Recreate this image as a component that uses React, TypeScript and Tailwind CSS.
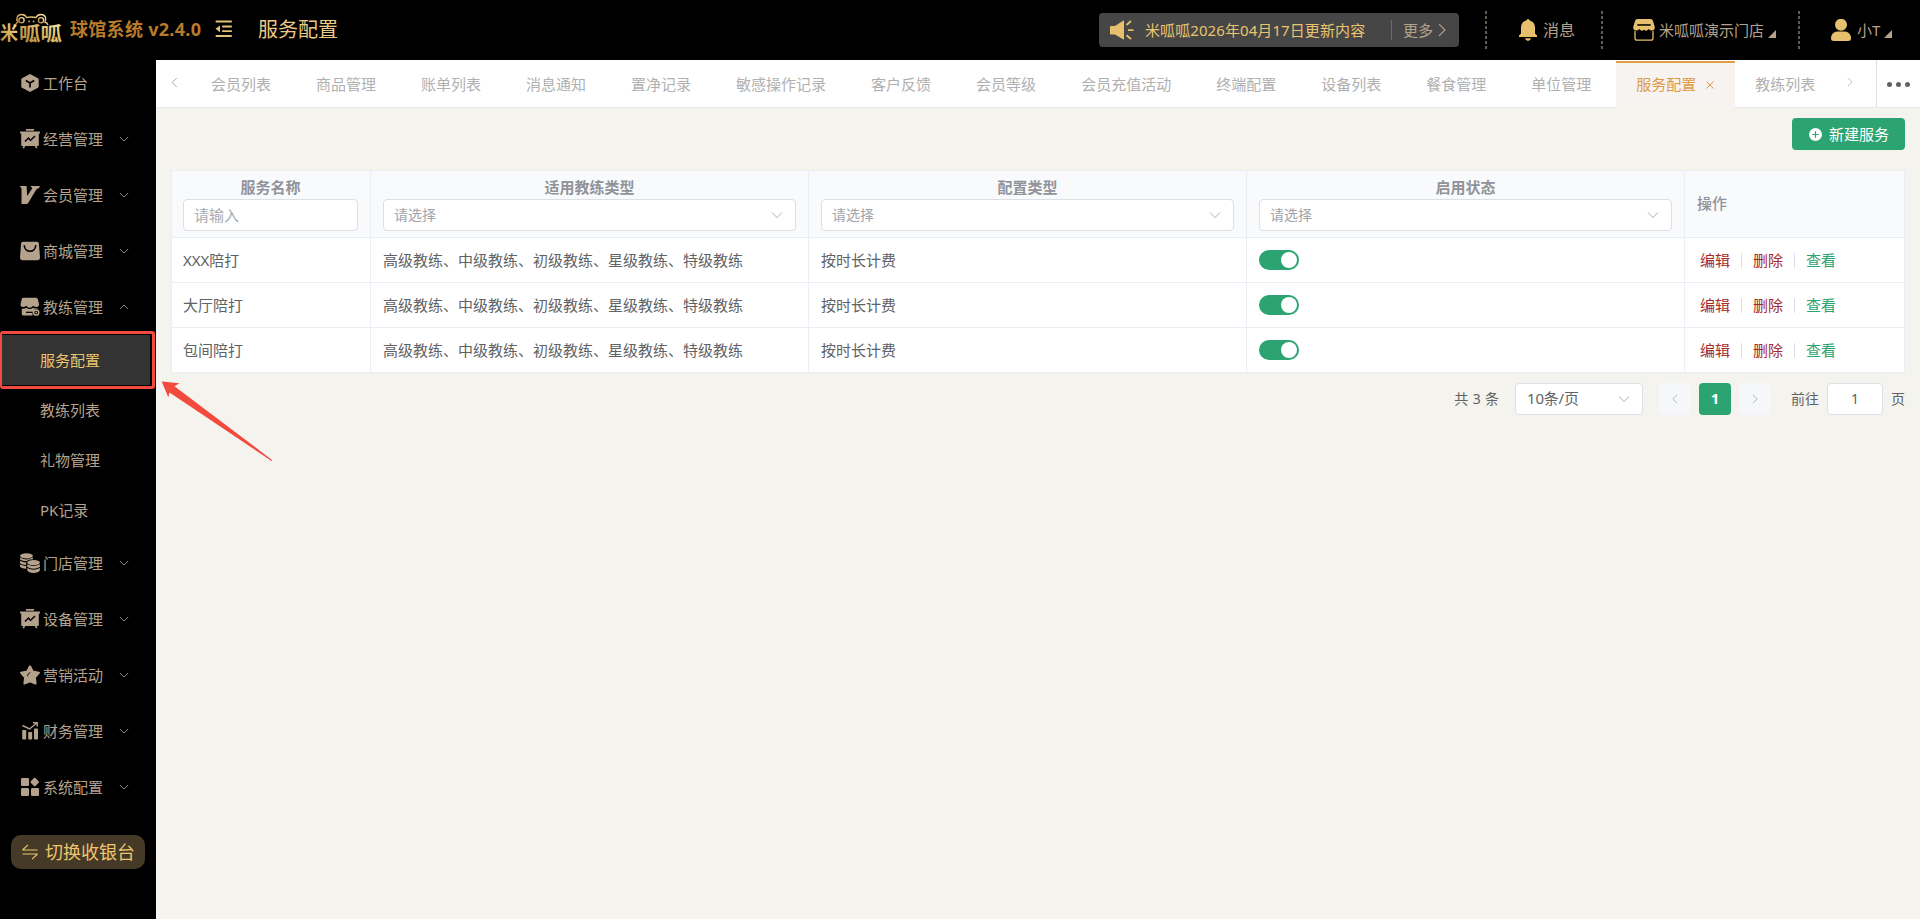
import React from "react";

const NAV = "#b5a28d";

function Chevron({ className = "", dir = "down" }: { className?: string; dir?: "down" | "up" | "left" | "right" }) {
  const d = {
    down: "M1 3.5 L6 8.5 L11 3.5",
    up: "M1 8.5 L6 3.5 L11 8.5",
    left: "M8.5 1 L3.5 6 L8.5 11",
    right: "M3.5 1 L8.5 6 L3.5 11",
  }[dir];
  return (
    <svg viewBox="0 0 12 12" className={className} fill="none" stroke="currentColor" strokeWidth="1">
      <path d={d} />
    </svg>
  );
}

function Logo() {
  return (
    <svg width="62" height="34" viewBox="0 0 62 34" className="block shrink-0">
      <defs>
        <linearGradient id="gold" x1="0" y1="1" x2="1" y2="0">
          <stop offset="0" stopColor="#a87a2c" />
          <stop offset="0.55" stopColor="#d9b666" />
          <stop offset="1" stopColor="#fbe9b4" />
        </linearGradient>
      </defs>
      <g fill="none" stroke="url(#gold)" strokeWidth="1.400">
        <path d="M15.500 14 C15.300 11.500 16 10 17.800 9 C15.500 5.500 17.500 1.500 21.500 1.500 C24 1.500 25.800 2.800 26.500 4.500 Q31.500 3.500 36 4.500 C36.800 2.800 38.500 1.500 41 1.500 C45 1.500 47 5.500 45 9 C46.500 9.500 47.500 10.500 48 12" />
        <circle cx="21.500" cy="7.200" r="2.600" />
        <circle cx="41" cy="7.200" r="2.600" />
      </g>
      <g fill="url(#gold)">
        <circle cx="29" cy="8.500" r="0.900" />
        <circle cx="33.500" cy="8.500" r="0.900" />
        <text x="0" y="27" fontSize="19" fontWeight="700" textLength="18" lengthAdjust="spacingAndGlyphs">米</text>
        <text x="19" y="28" fontSize="19" fontWeight="700" textLength="43" lengthAdjust="spacingAndGlyphs">呱呱</text>
      </g>
    </svg>
  );
}

function FoldIcon() {
  return (
    <svg width="18" height="18" viewBox="0 0 18 18" className="block shrink-0" fill="#e4c27c">
      <rect x="0.500" y="0.600" width="16.500" height="1.900" rx="0.900" />
      <rect x="7" y="5.600" width="10" height="1.900" rx="0.900" />
      <rect x="7" y="10.200" width="10" height="1.900" rx="0.900" />
      <rect x="0.500" y="15" width="16.500" height="1.900" rx="0.900" />
      <path d="M5 5.500 V12.200 L0.500 8.850 Z" />
    </svg>
  );
}

type IconName = "cube" | "board" | "vip" | "bag" | "coach" | "coins" | "star" | "chart" | "grid";

function NavIcon({ name }: { name: IconName }) {
  const common = { width: 20, height: 20, viewBox: "0 0 20 20", className: "block shrink-0", fill: NAV } as const;
  switch (name) {
    case "cube":
      return (
        <svg {...common}>
          <path d="M10 1 L18 5.200 Q18.700 5.600 18.700 6.400 V13.600 Q18.700 14.400 18 14.800 L10 19 L2 14.800 Q1.300 14.400 1.300 13.600 V6.400 Q1.300 5.600 2 5.200 Z" />
          <path d="M5.800 7.500 L10 10 L14.200 7.500 M10 10 V14.500" stroke="#000" strokeWidth="1.700" fill="none" />
        </svg>
      );
    case "board":
      return (
        <svg {...common}>
          <rect x="6" y="0" width="8" height="1.700" />
          <rect x="0" y="2.500" width="20" height="2" rx="0.500" />
          <path d="M1.200 4 H18.800 V16 Q18.800 17 17.800 17 H2.200 Q1.200 17 1.200 16 Z" />
          <path d="M4.500 16.500 L3.300 19.300 M15.500 16.500 L16.700 19.300" stroke={NAV} strokeWidth="1.600" />
          <path d="M5 12.500 L8.500 9 L10.500 11.500 L15 7" stroke="#000" strokeWidth="1.500" fill="none" />
        </svg>
      );
    case "vip":
      return (
        <svg {...common}>
          <path d="M0 1 H6.600 L7.200 11 L12.300 3.200 Q11.700 2 10.500 1.800 L11 1 H20 L18.800 3.200 Q17 3.400 16 5 L8 18.200 Q7.500 19 6.500 19 H1.500 V4 Q1.300 2.300 0 1.800 Z" />
        </svg>
      );
    case "bag":
      return (
        <svg {...common}>
          <path d="M3 0.800 H17 Q18.700 0.800 18.900 2.500 L20 16.800 Q20 19.200 17.600 19.200 H2.400 Q0 19.200 0 16.800 L1.100 2.500 Q1.300 0.800 3 0.800 Z" />
          <path d="M4.300 4.800 C4.800 12 15.200 12 15.700 4.800" stroke="#000" strokeWidth="1.600" fill="none" strokeLinecap="round" />
        </svg>
      );
    case "coach":
      return (
        <svg {...common}>
          <path d="M3.500 0.800 H16 Q17.500 0.800 17.900 2.300 L19 7.300 Q19 10 16.500 10 Q14.500 10 13.200 8.700 Q11.800 10.800 9.700 10.800 Q7.500 10.800 6.300 8.700 Q5 10 3 10 Q0.500 10 0.500 7.500 L1.700 2.200 Q2 0.800 3.500 0.800 Z" />
          <path d="M1.800 11.500 Q4.500 12 6.300 10.700 Q9.700 13.500 13.200 10.700 Q15 12 17.500 11.300 V12 Q13.200 12.300 12.500 16 V18.500 H3.200 Q1.800 18.500 1.800 17 Z" />
          <rect x="6" y="14.700" width="6.500" height="1.300" fill="#000" />
          <circle cx="16.200" cy="15.500" r="2.600" fill="none" stroke={NAV} strokeWidth="1.500" />
          <circle cx="16.200" cy="15.500" r="0.900" />
        </svg>
      );
    case "coins":
      return (
        <svg {...common}>
          <ellipse cx="6.500" cy="2.800" rx="6.400" ry="2.600" />
          <path d="M0.100 4.600 Q3 6.900 8 6.300 L12.900 4.600 V6.200 Q8 6.300 6.700 8.300 Q2 8.200 0.100 6.600 Z" />
          <path d="M0.100 7.800 Q3 9.500 6.200 9.400 V12 Q2 11.800 0.100 10.200 Z" />
          <path d="M0.100 11.300 Q3 13 6.200 12.900 V15.700 Q1 15.500 0.100 13.800 Z" />
          <ellipse cx="13.600" cy="9.600" rx="6.300" ry="2.600" />
          <path d="M7.300 11.300 Q13.500 14.800 19.900 11.300 V14 Q13.500 17.500 7.300 14 Z" />
          <path d="M7.300 15 Q13.500 18.500 19.900 15 V17.300 Q18.500 19.900 13.600 19.900 Q8.500 19.900 7.300 17.300 Z" />
        </svg>
      );
    case "star":
      return (
        <svg {...common}>
          <path
            d="M10 1.300 L12.700 6.500 L18.900 7.800 L14.900 12.300 L15.600 18.500 L10 16.200 L4.400 18.500 L5.100 12.300 L1.100 7.800 L7.300 6.500 Z"
            stroke={NAV}
            strokeWidth="2"
            strokeLinejoin="round"
          />
          <path d="M7.500 11.300 Q7.500 8.300 10.300 7.500" stroke="#000" strokeWidth="0.900" fill="none" />
        </svg>
      );
    case "chart":
      return (
        <svg {...common}>
          <rect x="2.200" y="9" width="4" height="9.500" rx="0.800" />
          <rect x="8.200" y="11" width="4" height="7.500" rx="0.800" />
          <rect x="14" y="7.500" width="4" height="11" rx="0.800" />
          <path d="M2.500 4.500 L9.500 8 L16.500 2.300 M13 1.700 H17.200 V5.600" stroke={NAV} strokeWidth="1.400" fill="none" />
        </svg>
      );
    case "grid":
      return (
        <svg {...common}>
          <rect x="1" y="1" width="8" height="8" rx="1.300" />
          <rect x="1" y="11" width="8" height="8" rx="1.300" />
          <rect x="11" y="11" width="8" height="8" rx="1.300" />
          <rect x="11.400" y="1.700" width="6.600" height="6.600" rx="1" transform="rotate(45 14.700 5)" />
        </svg>
      );
  }
}

function NavRow({ icon, label, open }: { icon: IconName; label: string; open?: boolean }) {
  return (
    <div className="flex h-14 shrink-0 items-center pl-5">
      <NavIcon name={icon} />
      <span className="ml-[3px] w-[60px]">{label}</span>
      <Chevron dir={open ? "up" : "down"} className="ml-4 size-[10px]" />
    </div>
  );
}

function Sidebar() {
  return (
    <aside className="flex w-[156px] shrink-0 flex-col bg-black text-[#b5a28d]">
      <div className="flex h-[51px] shrink-0 items-center pb-[5px] pl-5">
        <NavIcon name="cube" />
        <span className="ml-[3px]">工作台</span>
      </div>
      <NavRow icon="board" label="经营管理" />
      <NavRow icon="vip" label="会员管理" />
      <NavRow icon="bag" label="商城管理" />
      <NavRow icon="coach" label="教练管理" open />
      <div className="relative mr-1.5 flex h-[50px] shrink-0 items-center bg-[#333333] pl-10 text-[#edc56e]">
        服务配置
        <div className="absolute -top-1 left-0 h-[58px] w-[155px] rounded-[3px] border-[3px] border-l-2 border-[#f24a3d]" />
      </div>
      {["教练列表", "礼物管理", "PK记录"].map((t) => (
        <div key={t} className="flex h-[50px] shrink-0 items-center pl-10">
          {t}
        </div>
      ))}
      <NavRow icon="coins" label="门店管理" />
      <NavRow icon="board" label="设备管理" />
      <NavRow icon="star" label="营销活动" />
      <NavRow icon="chart" label="财务管理" />
      <NavRow icon="grid" label="系统配置" />
      <div className="mt-5 ml-[11px] flex h-[34px] w-[134px] shrink-0 items-center rounded-[10px] bg-[#453927] pl-[10px] text-lg text-[#edc56e]">
        <svg width="18" height="18" viewBox="0 0 18 18" fill="none" stroke="currentColor" strokeWidth="1.100">
          <path d="M1.500 7 H16.500 M1.500 7 L7 1.800 M16.500 11 H1.500 M16.500 11 L11 16.200" />
        </svg>
        <span className="ml-[6px] leading-none">切换收银台</span>
      </div>
    </aside>
  );
}

function DashedDivider() {
  return (
    <div className="h-[38px] w-0.5 shrink-0 bg-[repeating-linear-gradient(to_bottom,#655a50_0px,#655a50_3px,transparent_3px,transparent_5px)]" />
  );
}

function Corner() {
  return (
    <svg width="8" height="8" viewBox="0 0 8 8" className="mt-2 ml-1 shrink-0" fill={NAV}>
      <path d="M8 0 V8 H0 Z" />
    </svg>
  );
}

function Header() {
  return (
    <header className="flex h-[60px] shrink-0 items-center bg-black text-[#b5a28d]">
      <Logo />
      <span className="ml-2 w-[132px] pb-0.5 text-lg font-bold tracking-[0.3px] whitespace-nowrap text-[#b97b2a]">球馆系统 v2.4.0</span>
      <div className="ml-[13px] pb-0.5">
        <FoldIcon />
      </div>
      <span className="ml-[25px] pb-px text-xl text-[#edc988]">服务配置</span>
      <div className="ml-auto flex h-[34px] w-[360px] items-center rounded bg-[#464646]">
        <svg width="24" height="20" viewBox="0 0 24 20" className="ml-[11px] shrink-0" fill="#e6c06c">
          <path d="M1 6 H5 L13 0.700 Q14 0 14 1.200 V18.800 Q14 20 13 19.300 L5 14.500 H1 Q0 14.500 0 13.500 V7 Q0 6 1 6 Z" />
          <path d="M16.500 5 L21 1 M18 10.200 H23.500 M16.500 15.300 L21 19" stroke="#e6c06c" strokeWidth="1.800" />
        </svg>
        <span className="ml-[11px] w-[220px] tracking-[0.09px] whitespace-nowrap text-[#e9c46f]">米呱呱2026年04月17日更新内容</span>
        <div className="ml-[26px] h-5 w-px bg-[#6b6b6b]" />
        <span className="ml-[11px]">更多</span>
        <Chevron dir="right" className="ml-[2px] size-3.5" />
      </div>
      <div className="ml-[26px]">
        <DashedDivider />
      </div>
      <svg width="18" height="22" viewBox="0 0 18 22" className="ml-8 shrink-0" fill="#e6c06c">
        <path d="M9 0 Q10.500 0 10.700 1.500 C14 2.300 16 5 16 8.500 V14.500 L18 16.600 V18 H0 V16.600 L2 14.500 V8.500 C2 5 4 2.300 7.300 1.500 Q7.500 0 9 0 Z" />
        <path d="M6 19.300 H12 Q11.300 22 9 22 Q6.700 22 6 19.300 Z" />
      </svg>
      <span className="ml-1.5 text-base">消息</span>
      <div className="ml-[26px]">
        <DashedDivider />
      </div>
      <svg width="22" height="22" viewBox="0 0 22 22" className="ml-[30px] shrink-0" fill="#e6c06c">
        <path d="M4.500 0 H17.500 Q19.500 0 20 2 L21.800 8 Q21.800 11.500 19 11.500 Q17 11.500 15.700 10 Q14.500 11.700 13 11.700 Q11.800 11.700 11 10.500 Q10.200 11.700 9 11.700 Q7.500 11.700 6.300 10 Q5 11.500 3 11.500 Q0.200 11.500 0.200 8 L2 2 Q2.500 0 4.500 0 Z" />
        <rect x="4.300" y="5.200" width="13.400" height="1.500" fill="#000" />
        <path d="M2 12 V19 Q2 21.200 4.200 21.200 H17.800 Q20 21.200 20 19 V12" fill="none" stroke="#e6c06c" strokeWidth="1.300" />
      </svg>
      <span className="ml-1">米呱呱演示门店</span>
      <Corner />
      <div className="ml-[22px]">
        <DashedDivider />
      </div>
      <svg width="20" height="22" viewBox="0 0 20 22" className="ml-[31px] shrink-0" fill="#e6c06c">
        <circle cx="10" cy="5.800" r="6" />
        <path d="M6 12.500 H14 Q20 13.500 20 19.500 Q20 22 17 22 H3 Q0 22 0 19.500 Q0 13.500 6 12.500 Z" />
      </svg>
      <span className="ml-1.5 w-[23px] whitespace-nowrap">小T</span>
      <Corner />
      <div className="w-7 shrink-0" />
    </header>
  );
}

const TABS = [
  "会员列表", "商品管理", "账单列表", "消息通知", "置净记录", "敏感操作记录", "客户反馈", "会员等级",
  "会员充值活动", "终端配置", "设备列表", "餐食管理", "单位管理", "服务配置", "教练列表",
];

function TabBar() {
  return (
    <div className="flex h-12 shrink-0 border-b border-[#e4e7ed] bg-white text-[#b0b0b0]">
      <div className="flex w-[35px] shrink-0 items-center pb-[3px] pl-[13px]">
        <Chevron dir="left" className="size-[11px] text-[#a0a0a0]" />
      </div>
      {TABS.map((t) =>
        t === "服务配置" ? (
          <div
            key={t}
            className="mt-px -mb-px flex w-[119px] shrink-0 items-center border-t-2 border-[#e09f47] bg-[#f7f3f1] pb-[2px] pl-5 text-[#dd9a45]"
          >
            {t}
            <svg width="8" height="8" viewBox="0 0 8 8" className="ml-[10px]" stroke="currentColor" strokeWidth="1">
              <path d="M0.500 0.500 L7.500 7.500 M7.500 0.500 L0.500 7.500" />
            </svg>
          </div>
        ) : (
          <div key={t} className="flex shrink-0 items-center pt-[1px] pr-[25px] pl-5">
            {t}
          </div>
        ),
      )}
      <div className="flex flex-1 items-center justify-end pr-[21px] pb-[3px]">
        <Chevron dir="right" className="size-[10px] text-[#b8b8b8]" />
      </div>
      <div className="flex w-11 shrink-0 items-center justify-center gap-1 border-l border-[#dcdfe6] pt-0.5">
        <i className="size-[5px] rounded-full bg-[#606266]" />
        <i className="size-[5px] rounded-full bg-[#606266]" />
        <i className="size-[5px] rounded-full bg-[#606266]" />
      </div>
    </div>
  );
}

const COLS = "grid grid-cols-[199px_438px_438px_438px_220px]";

function HeadCell({ title, input }: { title: string; input?: boolean }) {
  return (
    <div
      className={`flex flex-col items-center border-r border-[#ebeef5] pt-[5px] pr-3 ${input ? "pl-[11px]" : "pl-3"}`}
    >
      <div className="h-[23px] leading-[23px] font-bold">{title}</div>
      {input ? (
        <div className="flex h-8 w-full items-center rounded border border-[#dcdfe6] bg-white px-[10px] text-[#a8abb2]">请输入</div>
      ) : (
        <div className="flex h-8 w-full items-center justify-between rounded border border-[#dcdfe6] bg-white pr-3 pl-[10px] text-sm text-[#a0a4ad]">
          请选择
          <Chevron className="size-3 text-[#a8abb2]" />
        </div>
      )}
    </div>
  );
}

function Table() {
  const cell = "flex items-center border-r border-[#ebeef5] px-3";
  return (
    <div className="mt-5 w-[1734px] border-t border-l border-[#ebeef5] bg-white text-[#606266]">
      <div className={`${COLS} h-[67px] border-b border-[#ebeef5] bg-[#f9fafc] text-[#909399]`}>
        <HeadCell title="服务名称" input />
        <HeadCell title="适用教练类型" />
        <HeadCell title="配置类型" />
        <HeadCell title="启用状态" />
        <div className={`${cell} pb-0.5 font-medium`}>操作</div>
      </div>
      {["XXX陪打", "大厅陪打", "包间陪打"].map((name) => (
        <div key={name} className={`${COLS} h-[45px] border-b border-[#ebeef5]`}>
          <div className="flex items-center border-r border-[#ebeef5] pl-[11px]">{name}</div>
          <div className={cell}>高级教练、中级教练、初级教练、星级教练、特级教练</div>
          <div className={cell}>按时长计费</div>
          <div className={cell}>
            <div className="flex h-5 w-10 items-center justify-end rounded-full bg-[#2ba471] pr-0.5">
              <div className="size-4 rounded-full bg-white" />
            </div>
          </div>
          <div className={cell}>
            <span className="ml-[3px] text-[#a52a2a]">编辑</span>
            <i className="ml-[11px] h-[15px] w-px bg-[#dcdfe6]" />
            <span className="ml-[11px] text-[#a52a2a]">删除</span>
            <i className="ml-[11px] h-[15px] w-px bg-[#dcdfe6]" />
            <span className="ml-[11px] text-[#2ba471]">查看</span>
          </div>
        </div>
      ))}
    </div>
  );
}

function Pagination() {
  return (
    <div className="mt-[10px] flex h-8 items-center justify-end text-sm text-[#606266]">
      <span className="[word-spacing:0.7px]">共 3 条</span>
      <div className="ml-4 flex h-8 w-32 items-center justify-between rounded border border-[#dcdfe6] bg-white pr-3 pl-[11px] text-[15px]">
        <span className="tracking-[-0.2px]">10条/页</span>
        <Chevron className="size-3 text-[#a8abb2]" />
      </div>
      <div className="ml-4 flex size-8 items-center justify-center rounded-sm bg-[#f5f7fa]">
        <Chevron dir="left" className="size-[10px] text-[#a8abb2]" />
      </div>
      <div className="ml-2 flex size-8 items-center justify-center rounded-sm bg-[#2ba471] text-[15px] font-bold text-white">1</div>
      <div className="ml-2 flex size-8 items-center justify-center rounded-sm bg-[#f5f7fa]">
        <Chevron dir="right" className="size-[10px] text-[#a8abb2]" />
      </div>
      <span className="ml-5">前往</span>
      <div className="ml-2 flex h-8 w-14 items-center justify-center rounded border border-[#dcdfe6] bg-white">1</div>
      <span className="ml-2">页</span>
    </div>
  );
}

export default function App() {
  return (
    <div className="relative flex h-[919px] w-[1920px] flex-col overflow-hidden bg-[#f4f3ee] font-['Noto_Sans','Noto_Sans_CJK_SC',sans-serif] text-[15px]">
      <Header />
      <div className="flex min-h-0 flex-1">
        <Sidebar />
        <div className="flex min-w-0 flex-1 flex-col">
          <TabBar />
          <main className="pt-[10px] pr-[15px] pl-[15px]">
            <div className="ml-auto flex h-8 w-[113px] items-center rounded bg-[#2ba471] pl-[17px] text-white">
              <svg width="13" height="13" viewBox="0 0 13 13" className="mt-px shrink-0">
                <circle cx="6.500" cy="6.500" r="6.500" fill="#fff" />
                <path d="M6.500 3.200 V9.800 M3.200 6.500 H9.800" stroke="#2ba471" strokeWidth="1.200" />
              </svg>
              <span className="ml-[7px]">新建服务</span>
            </div>
            <Table />
            <Pagination />
          </main>
        </div>
      </div>
      <svg className="absolute top-[380px] left-[160px]" width="114" height="83" viewBox="160 380 114 83" fill="#f24a3d">
        <path d="M161.700 381.500 L179.500 383.200 L174.500 386.200 L272.300 460.200 L271.500 461 L169.500 392.500 L168.300 397.200 Z" />
      </svg>
    </div>
  );
}
